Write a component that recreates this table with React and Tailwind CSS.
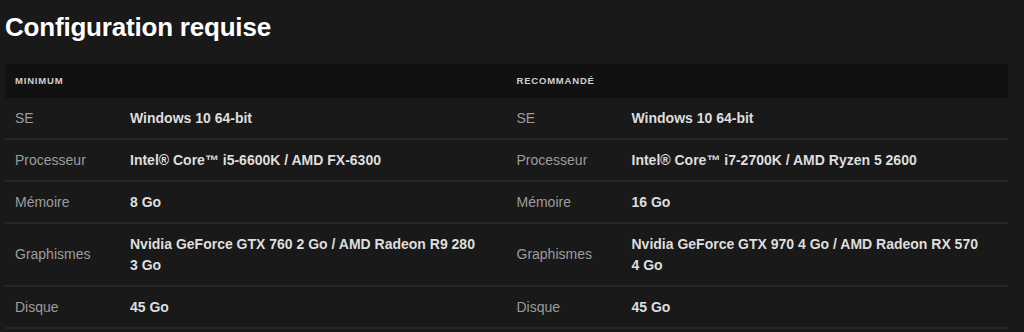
export default function App() {
  const rows = [
    ["SE", "Windows 10 64-bit", "SE", "Windows 10 64-bit"],
    ["Processeur", "Intel® Core™ i5-6600K / AMD FX-6300", "Processeur", "Intel® Core™ i7-2700K / AMD Ryzen 5 2600"],
    ["Mémoire", "8 Go", "Mémoire", "16 Go"],
    ["Graphismes", "Nvidia GeForce GTX 760 2 Go / AMD Radeon R9 280 3 Go", "Graphismes", "Nvidia GeForce GTX 970 4 Go / AMD Radeon RX 570 4 Go"],
    ["Disque", "45 Go", "Disque", "45 Go"],
  ];
  return (
    <div className="w-[1024px] h-[332px] overflow-hidden bg-[#191919] pl-[5px] pr-[16px] pt-[11px]" style={{ fontFamily: '"Liberation Sans", Arial, sans-serif' }}>
      <h1 className="text-[26px] leading-[32px] font-bold text-white tracking-[-0.2px]">Configuration requise</h1>
      <div className="mt-[21px]">
        <div className="flex bg-[#111111] h-[34px] items-center">
          <div className="flex-1 px-[10px] text-[9.5px] font-bold tracking-[0.8px] text-[#d0d0d0]">MINIMUM</div>
          <div className="flex-1 px-[10px] text-[9.5px] font-bold tracking-[0.8px] text-[#d0d0d0]">RECOMMANDÉ</div>
        </div>
        {rows.map((r, i) => (
          <div key={i} className="flex border-b-2 border-[#262626]">
            <div className="flex-1 grid grid-cols-[115px_1fr] px-[10px] py-[9.5px] items-center">
              <div className="text-[14px] leading-[21px] text-[#9c9c9c]">{r[0]}</div>
              <div className="text-[14px] leading-[21px] font-bold text-[#dedede] pr-[10px]">{r[1]}</div>
            </div>
            <div className="flex-1 grid grid-cols-[115px_1fr] px-[10px] py-[9.5px] items-center">
              <div className="text-[14px] leading-[21px] text-[#9c9c9c]">{r[2]}</div>
              <div className="text-[14px] leading-[21px] font-bold text-[#dedede] pr-[10px]">{r[3]}</div>
            </div>
          </div>
        ))}
      </div>
    </div>
  );
}
